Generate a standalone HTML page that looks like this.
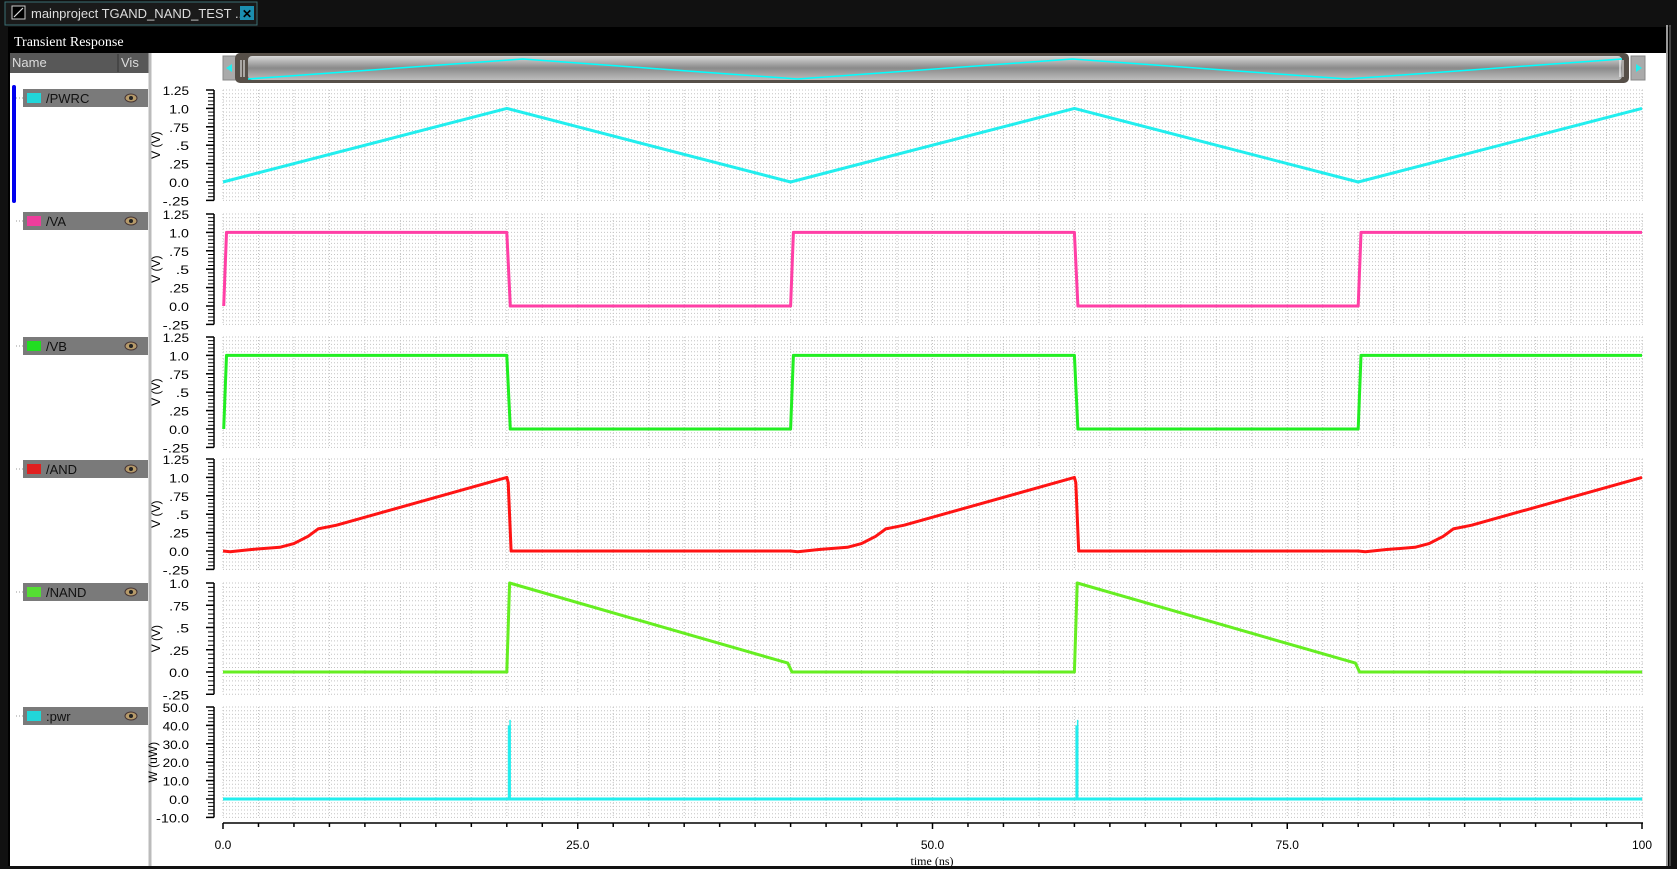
<!DOCTYPE html>
<html><head><meta charset="utf-8"><style>
html,body{margin:0;padding:0;background:#111;width:1677px;height:869px;overflow:hidden;font-family:"Liberation Sans",sans-serif}
</style></head><body>
<svg id="s" width="1677" height="869" xmlns="http://www.w3.org/2000/svg" style="position:absolute;left:0;top:0">
<defs>
<linearGradient id="g1" x1="0" y1="0" x2="0" y2="1"><stop offset="0" stop-color="#d8d8d8"/><stop offset=".5" stop-color="#8a8a8a"/><stop offset="1" stop-color="#bdbdbd"/></linearGradient>
</defs>
</svg>
<script>
var S='';
function r(x,y,w,h,f,extra){S+='<rect x="'+x+'" y="'+y+'" width="'+w+'" height="'+h+'" fill="'+f+'" '+(extra||'')+'/>';}
function l(x1,y1,x2,y2,c,w,extra){S+='<line x1="'+x1+'" y1="'+y1+'" x2="'+x2+'" y2="'+y2+'" stroke="'+c+'" stroke-width="'+(w||1)+'" '+(extra||'')+'/>';}
function t(x,y,s,sz,c,anchor,extra,fam){S+='<text x="'+x+'" y="'+y+'" font-size="'+sz+'" fill="'+c+'" text-anchor="'+(anchor||'start')+'" font-family="'+(fam||'Liberation Sans, sans-serif')+'" '+(extra||'')+'>'+s+'</text>';}
r(0,0,1677,869,'#111');
r(5,2,252,23,'#1a1a1a','stroke="#3a6f74" stroke-width="1"');
r(12,6,13,13,'#000','stroke="#ccc" stroke-width="1"');l(14,17,23,8,'#ddd',1.2);
t(31,18,'mainproject TGAND_NAND_TEST ...',13,'#ddd');
r(240,6,14,14,'#1b8fb0');t(247,18,'✕',12,'#000','middle','font-weight="bold"');
r(8,27,1663,842,'#000');
l(1667,25,1667,869,'#ccc',1.5);l(1670,25,1670,869,'#888',1);
t(14,46,'Transient Response',14,'#fff','start','','Liberation Serif, serif');
r(10,53,1656,814,'#fff');
r(10,53,139,20,'#585858');l(118,54,118,72,'#333',1);
t(12,67,'Name',13,'#ddd');t(121,67,'Vis',13,'#ddd');
l(150,53,150,867,'#bbb',3);
r(12,85,4,118,'#0000ee','rx="2"');
var legs=[['/PWRC','#22d6d9',89],['/VA','#ee3d9c',212],['/VB','#22dd22',337],['/AND','#e02020',460],['/NAND','#55dd33',583],[':pwr','#22d6d9',707]];
legs.forEach(function(g){
 l(16,g[2]+9,23,g[2]+9,'#999',1,'stroke-dasharray="1,2"');
 r(23,g[2],125,18,'#7a7a7a');r(27,g[2]+4,14,10,g[1]);
 t(46,g[2]+14,g[0],13,'#111');
 S+='<ellipse cx="131" cy="'+(g[2]+9)+'" rx="6" ry="4" fill="#b59a6a" stroke="#433" stroke-width="1"/><circle cx="131" cy="'+(g[2]+9)+'" r="2" fill="#222"/>';
});
r(223,56,14,24,'#aaa','stroke="#888"');S+='<polygon points="226,68 232,64 232,72" fill="#2ee"/>';
r(1631,56,14,24,'#aaa','stroke="#888"');S+='<polygon points="1642,68 1636,64 1636,72" fill="#2ee"/>';
r(235,53,1394,30,'#564f48','rx="5"');
r(248,56,1374,24,'url(#g1)','rx="4"');
l(241,60,241,77,'#fff',1);l(244,60,244,77,'#fff',1);
l(1620,60,1620,77,'#fff',1);l(1623,60,1623,77,'#fff',1);
var X0=223,PX=14.19;function X(ns){return X0+ns*PX;}
(function(){var p='';for(var i=0;i<=100;i++){var ph=i%40;var v=ph<=20?ph/20:(40-ph)/20;p+=(i?'L':'M')+(248+i*13.74).toFixed(1)+','+(79-v*20).toFixed(1);}S+='<path d="'+p+'" stroke="#0ff" stroke-width="1.5" fill="none"/>';})();
var plots=[
 {top:90,zero:182,unit:73.6,labs:[['1.25',1.25],['1.0',1],['.75',.75],['.5',.5],['.25',.25],['0.0',0],['-.25',-.25]],min:-.25,max:1.25,yl:'V (V)'},
 {top:213,zero:306,unit:73.6,labs:[['1.25',1.25],['1.0',1],['.75',.75],['.5',.5],['.25',.25],['0.0',0],['-.25',-.25]],min:-.25,max:1.25,yl:'V (V)'},
 {top:337,zero:429,unit:73.6,labs:[['1.25',1.25],['1.0',1],['.75',.75],['.5',.5],['.25',.25],['0.0',0],['-.25',-.25]],min:-.25,max:1.25,yl:'V (V)'},
 {top:460,zero:551,unit:73.6,labs:[['1.25',1.25],['1.0',1],['.75',.75],['.5',.5],['.25',.25],['0.0',0],['-.25',-.25]],min:-.25,max:1.25,yl:'V (V)'},
 {top:583,zero:672,unit:89,labs:[['1.0',1],['.75',.75],['.5',.5],['.25',.25],['0.0',0],['-.25',-.25]],min:-.25,max:1.0,yl:'V (V)'},
 {top:707,zero:799,unit:1.84,labs:[['50.0',50],['40.0',40],['30.0',30],['20.0',20],['10.0',10],['0.0',0],['-10.0',-10]],min:-10,max:50,yl:'W (uW)'}
];
plots.forEach(function(p){
 var Y=function(v){return p.zero-v*p.unit;};
 var yt=Y(p.max),yb=Y(p.min);
 var step=(p.max-p.min)/((p.labs.length-1)*5);
 for(var v=p.min;v<=p.max+1e-6;v+=step){var y=Y(v).toFixed(1);l(X0,y,1643,y,'#c4c4c4',1,'stroke-dasharray="1,2"');l(208,y,214,y,'#000',1);}
 for(var n=0;n<=100;n+=2.5){var x=X(n).toFixed(1);l(x,yt,x,yb,'#c4c4c4',1,'stroke-dasharray="1,2"');}
 l(214,yt,214,yb,'#000',1.5);
 p.labs.forEach(function(a){var y=Y(a[1]);t(189,y+5,a[0],12,'#000','end','textLength="'+(a[0].length*6.6)+'" lengthAdjust="spacingAndGlyphs"');l(206,y,214,y,'#000',1.5);});
 var cy=(yt+yb)/2;t(0,0,p.yl,12,'#000','middle','transform="translate('+(p.yl.length>5?157:160)+','+cy+') rotate(-90)"');
 p.Y=Y;
});
function path(pts,Y,c){var d='';pts.forEach(function(q,i){d+=(i?'L':'M')+X(q[0]).toFixed(1)+','+Y(q[1]).toFixed(1);});S+='<path d="'+d+'" stroke="'+c+'" stroke-width="3" fill="none" stroke-linejoin="round"/>';}
path([[0,0],[20,1],[40,0],[60,1],[80,0],[100,1]],plots[0].Y,'#22eeee');
function sq(){return [[0.05,0],[0.25,1],[20,1],[20.25,0],[40,0],[40.2,1],[60,1],[60.25,0],[80,0],[80.2,1],[100,1]];}
path(sq(),plots[1].Y,'#ff3fa6');
path(sq(),plots[2].Y,'#22ee22');
var a=[];[0,40,80].forEach(function(o){a.push([o,0],[o+0.5,-0.01],[o+2,0.02],[o+4,0.05],[o+5,0.1],[o+6,0.2],[o+6.7,0.3],[o+8,0.35],[o+20,1]);if(o<80)a.push([o+20.1,0.93],[o+20.3,0],[o+40,0]);});
path(a,plots[3].Y,'#ff1414');
path([[0,0],[20,0],[20.2,1],[39.8,0.1],[40.1,0],[60,0],[60.2,1],[79.8,0.1],[80.1,0],[100,0]],plots[4].Y,'#66ee22');
var P=plots[5].Y;
path([[0,0],[100,0]],P,'#22eeee');
[20,60].forEach(function(n){var x=X(n)+2;r(x-1,P(40),3,P(0)-P(40),'#22eeee');r(x+0.5,P(43),1.5,P(0)-P(43),'#22eeee');});
l(X0,823,1643,823,'#000',1.5);
for(var n=0;n<=100;n+=2.5){var x=X(n);l(x,823,x,(n%25==0)?829:827,'#000',1.5);}
[['0.0',0],['25.0',25],['50.0',50],['75.0',75],['100',100]].forEach(function(a){t(X(a[1]),849,a[0],12,'#000','middle');});
t(932,865,'time (ns)',12,'#000','middle','','Liberation Serif, serif');
r(0,866,1677,3,'#111');
document.getElementById('s').innerHTML+=S;
</script>
</body></html>
